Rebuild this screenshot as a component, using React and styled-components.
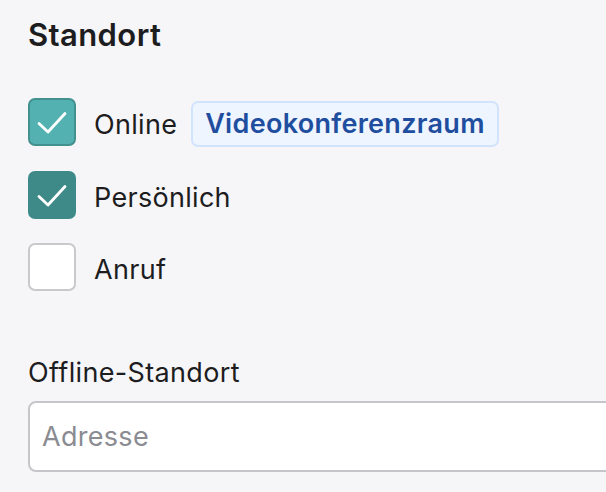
import React from "react";
import styled, { createGlobalStyle } from "styled-components";

const GlobalStyle = createGlobalStyle`
  html, body {
    margin: 0;
    padding: 0;
    background: #f6f6f8;
    overflow: hidden;
  }
  body {
    font-family: Inter, "Noto Sans", sans-serif;
    color: #1d1d1f;
  }
`;

const Page = styled.div`
  display: flex;
  flex-direction: column;
  padding: 17px 0 0 28px;
  width: 606px;
  height: 492px;
  box-sizing: border-box;
  overflow: hidden;
`;

const Title = styled.h2`
  margin: 0;
  font-size: 31px;
  line-height: 36px;
  font-weight: 600;
  letter-spacing: 0.4px;
`;

const OptionList = styled.div`
  display: flex;
  flex-direction: column;
  gap: 24px;
  margin-top: 44px;
`;

const OptionRow = styled.label`
  display: flex;
  align-items: center;
  gap: 18px;
  cursor: pointer;
`;

const Box = styled.span`
  flex: none;
  width: 48px;
  height: 48px;
  box-sizing: border-box;
  border-radius: 7px;
  display: flex;
  align-items: center;
  justify-content: center;
  background: ${(p) => (p.$variant === "light" ? "#53b2b1" : p.$variant === "dark" ? "#3e8a88" : "#ffffff")};
  border: 2px solid
    ${(p) => (p.$variant === "light" ? "#43918f" : p.$variant === "dark" ? "#3e8a88" : "#c9c9cc")};
`;

const OptionText = styled.span`
  display: flex;
  align-items: center;
  gap: 14px;
  margin-top: 5px;
  font-size: 27px;
  line-height: 32px;
  letter-spacing: 0.3px;
  white-space: nowrap;
`;

const Badge = styled.span`
  display: inline-block;
  margin-top: -1px;
  padding: 5px 12px;
  border: 2px solid #d2e4fb;
  border-radius: 7px;
  background: #eef5ff;
  color: #1f4e9f;
  font-weight: 600;
  font-size: 27px;
  line-height: 32px;
  letter-spacing: 0.3px;
`;

const FieldLabel = styled.div`
  margin-top: 66px;
  font-size: 27px;
  line-height: 32px;
  letter-spacing: 0.35px;
`;

const Input = styled.input`
  flex: none;
  margin-top: 12px;
  width: 620px;
  height: 71px;
  box-sizing: border-box;
  border: 2px solid #c6c6ca;
  border-radius: 8px;
  background: #ffffff;
  padding: 0 12px;
  font-family: Inter, "Noto Sans", sans-serif;
  font-size: 27px;
  letter-spacing: 0.3px;
  color: #1d1d1f;
  outline: none;
  &::placeholder {
    color: #8b8b92;
  }
`;

const Check = () => (
  <svg width="44" height="44" viewBox="0 0 44 44" fill="none">
    <path d="M9 23.5l9 8.5L35 13.5" stroke="#ffffff" strokeWidth="2.8" strokeLinecap="round" strokeLinejoin="round" />
  </svg>
);

const options = [
  { label: "Online", variant: "light", badge: "Videokonferenzraum" },
  { label: "Persönlich", variant: "dark" },
  { label: "Anruf", variant: "empty" },
];

export default function App() {
  return (
    <>
      <GlobalStyle />
      <Page>
        <Title>Standort</Title>
        <OptionList>
          {options.map((o) => (
            <OptionRow key={o.label}>
              <Box $variant={o.variant}>{o.variant !== "empty" && <Check />}</Box>
              <OptionText>
                {o.label}
                {o.badge && <Badge>{o.badge}</Badge>}
              </OptionText>
            </OptionRow>
          ))}
        </OptionList>
        <FieldLabel>Offline-Standort</FieldLabel>
        <Input placeholder="Adresse" />
      </Page>
    </>
  );
}
